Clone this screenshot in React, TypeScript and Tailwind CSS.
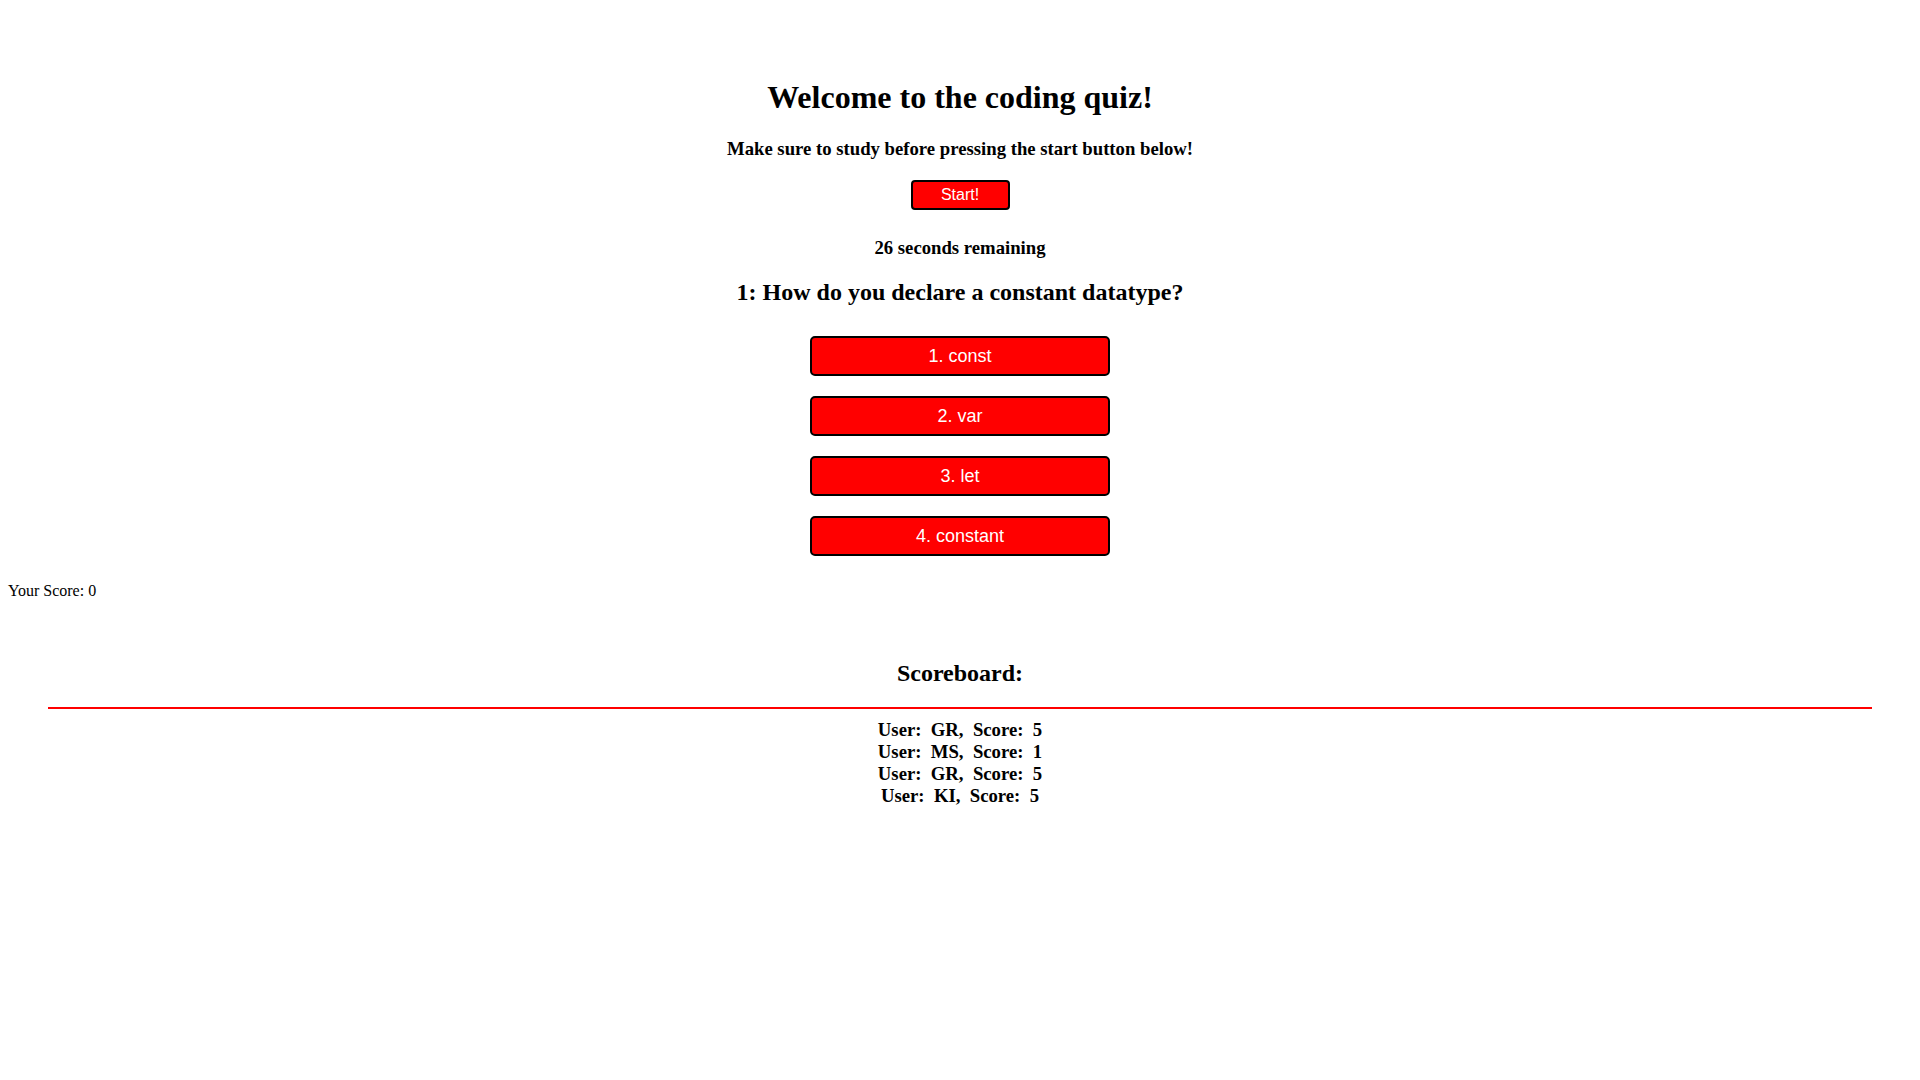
import React from "react";

const answers = ["1. const", "2. var", "3. let", "4. constant"];

const scores = [
  { user: "GR", score: 5 },
  { user: "MS", score: 1 },
  { user: "GR", score: 5 },
  { user: "KI", score: 5 },
];

export default function App() {
  return (
    <div className="min-h-screen bg-white px-2 font-['Liberation_Serif',serif] text-black">
      {/* Header */}
      <div className="flex flex-col items-center">
        <h1 className="mt-[81px] text-[32px] font-bold leading-none">Welcome to the coding quiz!</h1>
        <h3 className="mt-[27px] text-[18.72px] font-bold leading-none">
          Make sure to study before pressing the start button below!
        </h3>
        <button className="mt-[21px] h-[30px] w-[99px] rounded-[4px] border-2 border-black bg-[#ff0000] font-['Liberation_Sans',sans-serif] text-[16px] leading-none text-white">
          Start!
        </button>
        <h3 className="mt-[29px] text-[18.72px] font-bold leading-none">26 seconds remaining</h3>

        {/* Question */}
        <h2 className="mt-[23px] text-[24px] font-bold leading-none">1: How do you declare a constant datatype?</h2>
        <div className="mt-[32px] flex flex-col gap-[20px]">
          {answers.map((a) => (
            <button
              key={a}
              className="h-[40px] w-[300px] rounded-[5px] border-2 border-black bg-[#ff0000] font-['Liberation_Sans',sans-serif] text-[18px] leading-none text-white"
            >
              {a}
            </button>
          ))}
        </div>
      </div>

      <p className="mt-[27px] text-[16px] leading-none">Your Score: 0</p>

      {/* Scoreboard */}
      <div className="flex flex-col items-center">
        <h2 className="mt-[62px] text-[24px] font-bold leading-none">Scoreboard:</h2>
      </div>
      <div className="mx-10 mt-[22px] h-[2px] bg-[#ff0000]" />
      <ul className="mt-[10px] flex flex-col items-center">
        {scores.map((s, i) => (
          <li key={i} className="whitespace-pre text-[18.72px] font-bold leading-[22px]">
            {`User:  ${s.user},  Score:  ${s.score}`}
          </li>
        ))}
      </ul>
    </div>
  );
}
